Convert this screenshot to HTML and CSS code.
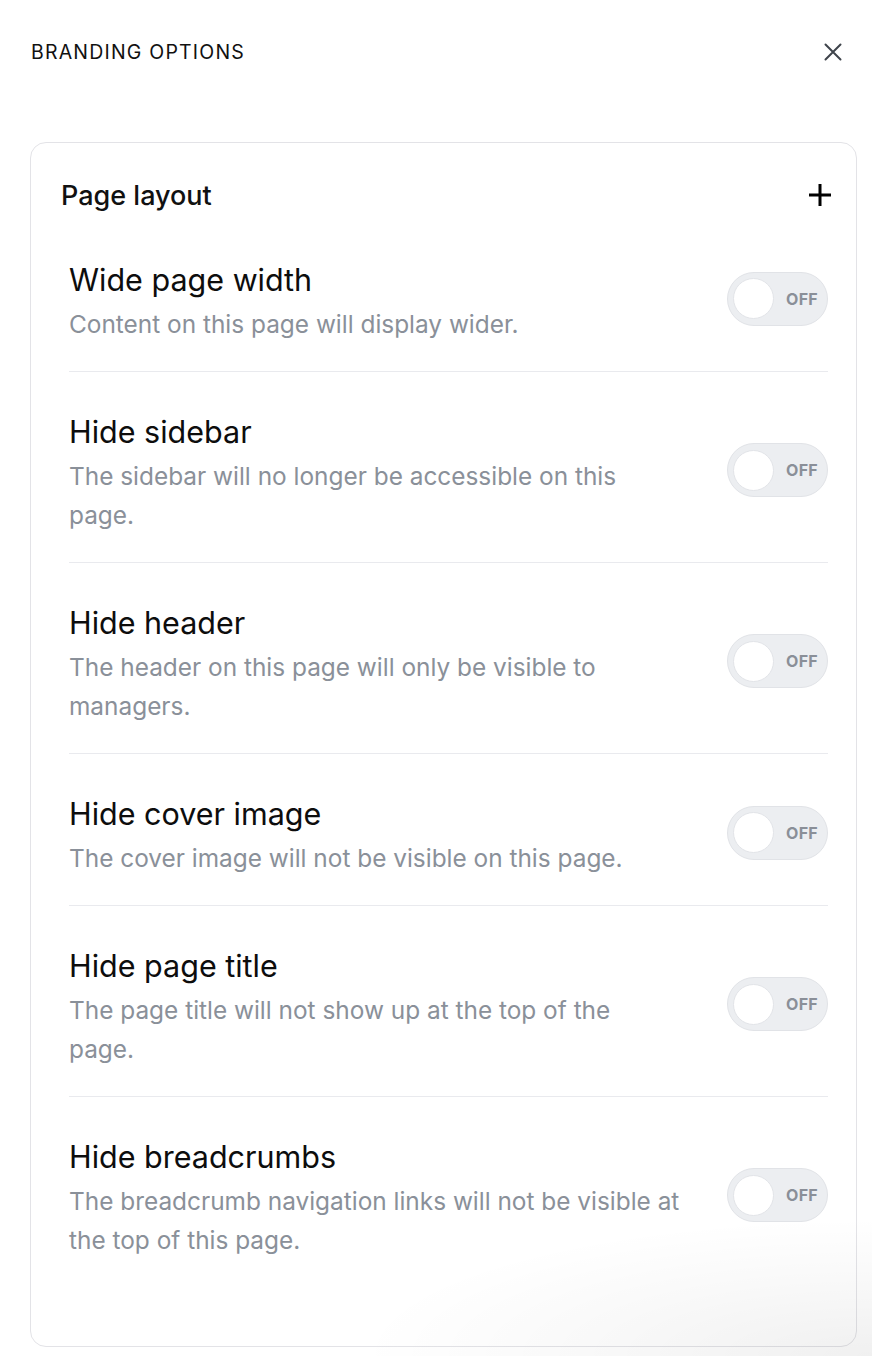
FILE: index.html
```html
<!DOCTYPE html>
<html lang="en">
<head>
<meta charset="utf-8">
<title>Branding options</title>
<link rel="stylesheet" href="styles.css">
</head>
<body>
<div class="panel">
  <header class="panel-header">
    <h1 class="panel-title">BRANDING OPTIONS</h1>
    <button class="icon-btn close-btn" aria-label="Close">
      <svg width="18" height="18" viewBox="0 0 18 18" fill="none" stroke="#3f444b" stroke-width="2" stroke-linecap="round"><path d="M1.5 1.5 L16.5 16.5 M16.5 1.5 L1.5 16.5"/></svg>
    </button>
  </header>

  <section class="card">
    <div class="card-header">
      <h2 class="card-title">Page layout</h2>
      <button class="icon-btn add-btn" aria-label="Add">
        <svg width="24" height="24" viewBox="0 0 24 24" fill="none" stroke="#000" stroke-width="3" stroke-linecap="butt"><path d="M12 1 V23 M1 12 H23"/></svg>
      </button>
    </div>

    <ul class="options">
      <li class="option">
        <div class="option-text">
          <div class="option-title">Wide page width</div>
          <div class="option-desc">Content on this page will display wider.</div>
        </div>
        <div class="toggle"><span class="knob"></span><span class="toggle-label">OFF</span></div>
      </li>
      <li class="option">
        <div class="option-text">
          <div class="option-title">Hide sidebar</div>
          <div class="option-desc">The sidebar will no longer be accessible on this<br>page.</div>
        </div>
        <div class="toggle"><span class="knob"></span><span class="toggle-label">OFF</span></div>
      </li>
      <li class="option">
        <div class="option-text">
          <div class="option-title">Hide header</div>
          <div class="option-desc">The header on this page will only be visible to<br>managers.</div>
        </div>
        <div class="toggle"><span class="knob"></span><span class="toggle-label">OFF</span></div>
      </li>
      <li class="option">
        <div class="option-text">
          <div class="option-title">Hide cover image</div>
          <div class="option-desc">The cover image will not be visible on this page.</div>
        </div>
        <div class="toggle"><span class="knob"></span><span class="toggle-label">OFF</span></div>
      </li>
      <li class="option">
        <div class="option-text">
          <div class="option-title">Hide page title</div>
          <div class="option-desc">The page title will not show up at the top of the<br>page.</div>
        </div>
        <div class="toggle"><span class="knob"></span><span class="toggle-label">OFF</span></div>
      </li>
      <li class="option">
        <div class="option-text">
          <div class="option-title">Hide breadcrumbs</div>
          <div class="option-desc">The breadcrumb navigation links will not be visible at<br>the top of this page.</div>
        </div>
        <div class="toggle"><span class="knob"></span><span class="toggle-label">OFF</span></div>
      </li>
    </ul>
  </section>
</div>
<div class="fade"></div>
</body>
</html>
```

FILE: styles.css
```css
* { box-sizing: border-box; }

html, body {
  margin: 0;
  padding: 0;
  background: #ffffff;
}

body {
  font-family: Inter, "Noto Sans", "Liberation Sans", sans-serif;
  color: #111111;
  width: 872px;
  min-height: 1356px;
  position: relative;
  overflow: hidden;
}

.panel {
  padding: 30px 15px 0 30px;
}

.panel-header {
  display: flex;
  align-items: center;
  justify-content: space-between;
  height: 44px;
  padding-left: 1px;
  margin-bottom: 68px;
}

.panel-title {
  margin: 0;
  font-size: 19.5px;
  font-weight: 400;
  letter-spacing: 1.2px;
  color: #111;
}

.icon-btn {
  border: 0;
  background: none;
  padding: 0;
  display: flex;
  align-items: center;
  justify-content: center;
  cursor: pointer;
}

.close-btn {
  margin-right: 15px;
}

.card {
  border: 1px solid #e3e3e7;
  border-radius: 16px;
  height: 1205px;
  padding: 36px 25px 0 30px;
}

.card-header {
  display: flex;
  align-items: center;
  justify-content: space-between;
  height: 32px;
  margin-bottom: 9px;
}

.card-title {
  margin: 0;
  font-size: 27px;
  font-weight: 500;
  color: #111;
}

.add-btn {
  margin-right: -1px;
}

.options {
  list-style: none;
  margin: 0;
  padding: 0 3px 0 8px;
}

.option {
  display: flex;
  align-items: center;
  justify-content: space-between;
  gap: 30px;
  padding: 42px 0 27px;
  border-bottom: 1px solid #e9eaee;
}

.option:last-child {
  border-bottom: 0;
}

.option-text {
  flex: 1;
  min-width: 0;
}

.option-title {
  font-size: 30.5px;
  line-height: 36px;
  font-weight: 400;
  color: #0d0d0d;
  margin-bottom: 7px;
}

.option-desc {
  font-size: 24.4px;
  line-height: 39px;
  color: #8a9099;
  white-space: nowrap;
}

.toggle {
  flex: none;
  width: 101px;
  height: 54px;
  border-radius: 27px;
  background: #eceef1;
  border: 1px solid #e1e3e7;
  display: flex;
  align-items: center;
  padding: 0 10px 0 5px;
  margin-bottom: 9px;
  gap: 12px;
}

.knob {
  width: 41px;
  height: 41px;
  border-radius: 50%;
  background: #ffffff;
  border: 1px solid #e2e4e8;
  flex: none;
}

.toggle-label {
  font-size: 16px;
  font-weight: 700;
  color: #8a8f98;
  letter-spacing: 0.3px;
}

.fade {
  position: absolute;
  right: 0;
  bottom: 0;
  width: 520px;
  height: 140px;
  pointer-events: none;
  background: radial-gradient(ellipse at 100% 100%, rgba(0,0,0,0.06) 0%, rgba(0,0,0,0.025) 40%, rgba(0,0,0,0) 70%);
}
```
